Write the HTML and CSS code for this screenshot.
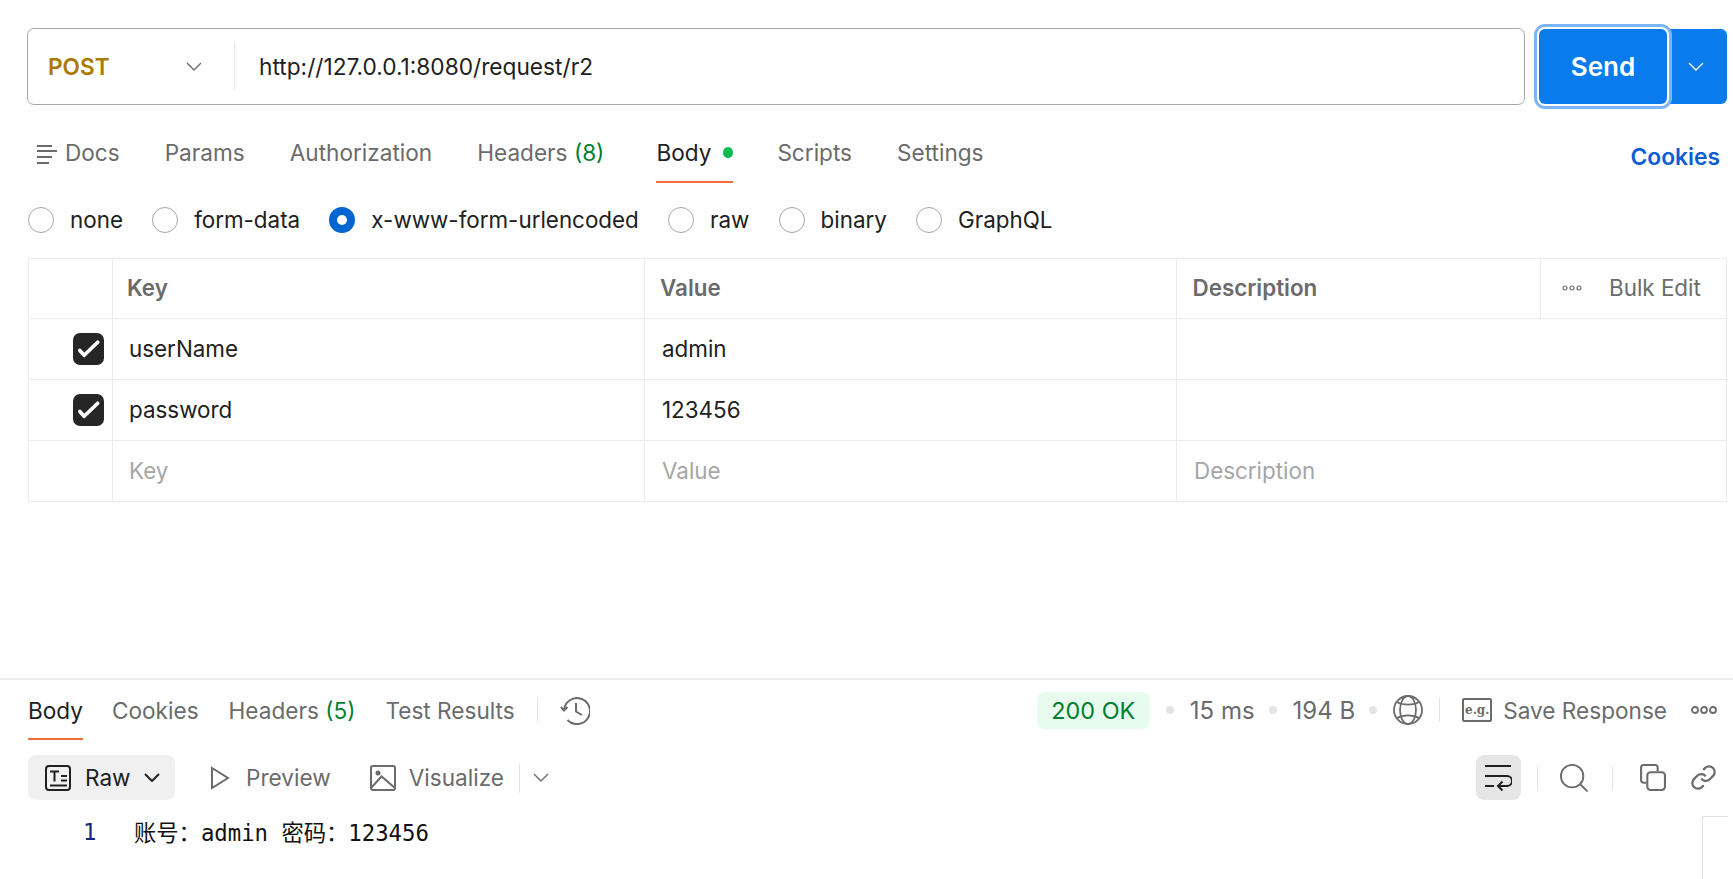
FILE: index.html
```html
<!DOCTYPE html>
<html lang="en">
<head>
<meta charset="utf-8">
<title>POST request</title>
<link rel="stylesheet" href="styles.css">
</head>
<body>
<div class="app">
  <section class="request">
    <div class="url-row">
      <div class="url-box">
        <div class="method"><span class="method-name">POST</span>
          <svg class="chev" viewBox="0 0 16 9"><path d="M1 1l7 7 7-7"/></svg>
        </div>
        <div class="url">http://127.0.0.1:8080/request/r2</div>
      </div>
      <div class="send-group">
        <button class="send">Send</button>
        <button class="send-more"><svg class="chev chev-white" viewBox="0 0 16 9"><path d="M1 1l7 7 7-7"/></svg></button>
      </div>
    </div>

    <nav class="tabs">
      <span class="tab tab-docs"><svg class="docs-icon" viewBox="0 0 20 20"><path d="M0 2h15M0 7h20M0 13h15M0 19h12"/></svg><span>Docs</span></span>
      <span class="tab">Params</span>
      <span class="tab">Authorization</span>
      <span class="tab"><span>Headers <span class="count">(8)</span></span></span>
      <span class="tab tab-active tab-body">Body<i class="dot"></i></span>
      <span class="tab">Scripts</span>
      <span class="tab">Settings</span>
      <span class="cookies">Cookies</span>
    </nav>

    <div class="radios">
      <label class="radio"><i class="circle"></i>none</label>
      <label class="radio"><i class="circle"></i>form-data</label>
      <label class="radio"><i class="circle circle-on"></i>x-www-form-urlencoded</label>
      <label class="radio"><i class="circle"></i>raw</label>
      <label class="radio"><i class="circle"></i>binary</label>
      <label class="radio"><i class="circle"></i>GraphQL</label>
    </div>

    <div class="kv">
      <div class="cell"></div>
      <div class="cell head head-key">Key</div>
      <div class="cell head">Value</div>
      <div class="cell head head-desc">Description</div>
      <div class="cell bulk">
        <svg class="dots-small" viewBox="0 0 20 6"><circle cx="3" cy="3" r="2"/><circle cx="10" cy="3" r="2"/><circle cx="17" cy="3" r="2"/></svg>
        <span>Bulk Edit</span>
      </div>

      <div class="cell check-cell"><span class="check"><svg viewBox="0 0 32 32"><path d="M7 17.500l4.500 5L25.500 9"/></svg></span></div>
      <div class="cell val">userName</div>
      <div class="cell val val-r">admin</div>
      <div class="cell val wide"></div>

      <div class="cell check-cell"><span class="check"><svg viewBox="0 0 32 32"><path d="M7 17.500l4.500 5L25.500 9"/></svg></span></div>
      <div class="cell val">password</div>
      <div class="cell val val-r">123456</div>
      <div class="cell val wide"></div>

      <div class="cell"></div>
      <div class="cell val ph">Key</div>
      <div class="cell val ph val-r">Value</div>
      <div class="cell val ph wide val-r">Description</div>
    </div>
  </section>

  <section class="response">
    <div class="res-head">
      <span class="rtab rtab-active">Body</span>
      <span class="rtab">Cookies</span>
      <span class="rtab"><span>Headers <span class="count">(5)</span></span></span>
      <span class="rtab">Test Results</span>
      <i class="vline vline-hist"></i>
      <svg class="ic ic-hist" viewBox="0 0 30 30"><path d="M4 15.500A13 13 0 1 1 7.500 25"/><path d="M1 12l3 3.500 3.500-3.500"/><path d="M16 8v8.500l6 3.500"/></svg>

      <div class="res-meta">
        <span class="status">200 OK</span>
        <i class="sep"></i><span class="metric">15 ms</span>
        <i class="sep"></i><span class="metric">194 B</span>
        <i class="sep"></i>
        <svg class="ic ic-globe" viewBox="0 0 30 30"><circle cx="15" cy="15" r="14"/><ellipse cx="15" cy="15" rx="8" ry="14"/><path d="M4 7C10 10.500 20 10.500 26 7M4 23C10 19.500 20 19.500 26 23"/></svg>
        <i class="vline"></i>
        <span class="eg"><span>e.g.</span></span>
        <span class="save">Save Response</span>
        <svg class="dots-big" viewBox="0 0 26 8"><circle cx="4" cy="4" r="3"/><circle cx="13" cy="4" r="3"/><circle cx="22" cy="4" r="3"/></svg>
      </div>
    </div>

    <div class="res-tools">
      <span class="raw">
        <svg class="ic ic-raw" viewBox="0 0 26 26"><rect x="1" y="1" width="24" height="24" rx="3"/><path d="M5 6.500h9M9.500 6.500v10M16 11h6M16 15.500h6M5 20.500h17"/></svg>
        <span>Raw</span>
        <svg class="chev chev-dark" viewBox="0 0 16 9"><path d="M1 1l7 7 7-7"/></svg>
      </span>
      <span class="tool tool-preview"><svg class="ic ic-play" viewBox="0 0 20 24"><path d="M2 2l16 10L2 22z"/></svg><span>Preview</span></span>
      <span class="tool tool-vis"><svg class="ic ic-img" viewBox="0 0 26 26"><rect x="1" y="1" width="24" height="24" rx="2"/><circle cx="8" cy="8" r="2.500" class="solid"/><path d="M1 23l10.500-11.500L25 23"/></svg><span>Visualize</span></span>
      <i class="vline vline-vis"></i>
      <svg class="chev chev-vis" viewBox="0 0 16 9"><path d="M1 1l7 7 7-7"/></svg>

      <div class="res-actions">
        <span class="wrap-btn">
          <svg class="ic ic-wrap" viewBox="0 0 28 26"><path d="M1 1h26M1 11h22a4.500 4.500 0 0 1 0 10h-9M18.500 16.500l-4.500 4.500 4.500 4.500M1 21h9"/></svg>
        </span>
        <i class="vline vline-a"></i>
        <svg class="ic ic-search" viewBox="0 0 30 30"><circle cx="13" cy="13" r="12"/><path d="M22 22l7.500 7.500"/></svg>
        <i class="vline vline-b"></i>
        <svg class="ic ic-copy" viewBox="0 0 26 26"><path d="M7 18H4a2.500 2.500 0 0 1-2-2.500V3.500A2.500 2.500 0 0 1 4 1h12a2.500 2.500 0 0 1 2 2.500V7"/><rect x="8" y="8" width="17" height="17" rx="3"/></svg>
        <svg class="ic ic-link" viewBox="0 0 24 24"><path d="M10 13a5 5 0 0 0 7.540.54l3-3a5 5 0 0 0-7.070-7.070l-1.720 1.710"/><path d="M14 11a5 5 0 0 0-7.540-.54l-3 3a5 5 0 0 0 7.070 7.070l1.710-1.710"/></svg>
      </div>
    </div>

    <div class="code">
      <span class="ln">1</span>
      <span class="code-text">账号：admin 密码：123456</span>
      <i class="scroll-track"></i>
    </div>
  </section>
</div>
</body>
</html>
```

FILE: styles.css
```css
* { box-sizing: border-box; }
html, body { margin: 0; padding: 0; background: #fff; }
body {
  font-family: Inter, "Noto Sans", sans-serif;
  font-size: 22.400px;
  color: #6b6b6b;
  overflow: hidden;
}
i { display: block; font-style: normal; }
svg { display: block; flex: none; }
.app { width: 1733px; height: 879px; display: flex; flex-direction: column; }
.request { flex: 1; padding: 28px 5px 0 27px; }

.url-row { display: flex; align-items: flex-start; }
.url-box {
  width: 1498px; height: 77px; flex: none;
  border: 1.500px solid #a8a8a8; border-radius: 7px;
  display: flex; align-items: center;
}
.method {
  width: 207px; height: 46px; padding: 0 10px 0 20px;
  display: flex; align-items: center; justify-content: space-between;
  border-right: 1px solid #e6e6e6;
}
.method-name { color: #ab7800; font-weight: 600; font-size: 22.600px; }
.method .chev { margin-right: 22px; }
.url { color: #212121; padding-left: 24px; font-size: 22.700px; }
.chev { width: 16px; height: 9px; fill: none; stroke: #6b6b6b; stroke-width: 1.400; }
.chev-white { stroke: #fff; }
.chev-dark { stroke: #212121; stroke-width: 2; }

.send-group { display: flex; margin-left: 14px; align-items: flex-start; padding-top: 1px; }
.send {
  width: 128px; height: 75px;
  background: #097bed; color: #fff; border: 0; border-radius: 6px;
  font: 600 26px Inter, sans-serif;
  box-shadow: 0 0 0 2px #fff, 0 0 0 5px #7cb5f6;
  position: relative; z-index: 1; padding: 0;
}
.send-more {
  width: 60px; height: 75px; padding: 0 0 0 21px;
  background: #097bed; border: 0; border-radius: 0 6px 6px 0;
  display: flex; align-items: center;
}

.tabs { display: flex; align-items: flex-start; height: 75.500px; margin-top: 26px; padding-left: 10px; gap: 45px; font-size: 22.600px; }
.tab { display: flex; align-items: center; height: 49px; white-space: pre; padding-bottom: 6px; }
.tab-docs { gap: 8px; }
.docs-icon { width: 20px; height: 20px; fill: none; stroke: #6b6b6b; stroke-width: 2; margin-top: 2px; }
.count { color: #007f31; }
.tab-active { color: #212121; }
.tab-body { margin-left: 7px; border-bottom: 2.500px solid #f26b3a; width: 77px; margin-right: -1px; height: 52px; padding-bottom: 7.500px; }
.dot { width: 11px; height: 11px; border-radius: 50%; background: #0cbb52; margin-left: 12px; }
.cookies { margin-left: auto; margin-right: 8px; margin-top: 12px; color: #0b5fd0; font-weight: 600; font-size: 22.800px; }

.radios { display: flex; height: 26px; padding-left: 1px; gap: 29.200px; color: #212121; }
.radio { display: flex; align-items: center; gap: 16px; }
.circle { width: 26px; height: 26px; border-radius: 50%; border: 1.300px solid #a6a6a6; background: #fff; }
.circle-on { border: 8px solid #0265d2; }

.kv {
  display: grid;
  grid-template-columns: 84px 532px 532px 364px 186px;
  grid-auto-rows: 60.800px;
  margin-top: 25px; width: 1698px; margin-left: 1px;
  border-top: 1.500px solid #ececec; border-left: 1.500px solid #ececec;
}
.cell {
  border-right: 1.500px solid #ececec; border-bottom: 1.500px solid #ececec;
  display: flex; align-items: center; padding: 0 0 1px 15px;
}
.head { font-weight: 600; }
.head-key { padding-left: 14px; }
.head-desc { padding-left: 15.500px; }
.val { color: #212121; padding-left: 16px; }
.val-r { padding-left: 17px; }
.wide { grid-column: span 2; }
.ph { color: #a6a6a6; }
.bulk { padding-left: 21px; gap: 27px; }
.dots-small { width: 20px; height: 6px; fill: none; stroke: #6b6b6b; stroke-width: 1.200; }
.check-cell { justify-content: flex-end; padding: 0 8px 0 0; }
.check { width: 31px; height: 32px; background: #262626; border-radius: 7px; display: flex; align-items: center; justify-content: center; }
.check svg { width: 31px; height: 32px; fill: none; stroke: #fff; stroke-width: 3.800; stroke-linecap: round; stroke-linejoin: round; }

.response { height: 201px; flex: none; border-top: 2px solid #ededed; position: relative; font-size: 22.600px; }
.res-head { display: flex; align-items: center; height: 60px; padding: 0 16px 0 28px; position: relative; }
.rtab { display: flex; white-space: pre; margin-right: 30px; }
.rtab-active { color: #212121; position: relative; margin-right: 29px; }
.rtab-active::after { content: ""; position: absolute; left: 0; right: 0; top: 41px; height: 2.500px; background: #f26b3a; }
.vline { width: 1px; height: 24px; background: #e4e4e4; flex: none; }
.vline-hist { margin-left: -7.500px; margin-right: 22px; }
.ic { fill: none; stroke: #6b6b6b; stroke-width: 2; }
.ic-hist { width: 30px; height: 30px; }
.res-meta { margin-left: auto; display: flex; align-items: center; }
.status { width: 113px; height: 37px; background: #e7fbef; color: #007f31; border-radius: 8px; display: flex; align-items: center; justify-content: center; font-size: 23.400px; margin-right: 2px; }
.metric { font-size: 24px; }
.sep { width: 8px; height: 8px; background: #e4e4e4; border-radius: 50%; margin-right: 16px; }
.res-meta span + .sep { margin-left: 14px; }
.ic-globe { width: 30px; height: 30px; margin-right: 16px; stroke-width: 1.800; }
.eg {
  width: 30px; height: 24px; border: 2px solid #6b6b6b; border-radius: 2px;
  margin-left: 22px; margin-right: 11px;
  display: flex; align-items: center; justify-content: center;
  font: 700 12px "DejaVu Serif", serif; color: #6b6b6b;
}
.dots-big { width: 26px; height: 8px; fill: none; stroke: #6b6b6b; stroke-width: 1.800; margin-left: 24px; }

.res-tools { display: flex; align-items: center; height: 45px; margin-top: 15px; padding: 0 16px 0 28px; }
.raw { width: 147px; height: 45px; background: #f0f0f0; border-radius: 8px; display: flex; align-items: center; color: #212121; padding-left: 17px; }
.ic-raw { width: 26px; height: 26px; stroke: #212121; margin-right: 14px; }
.raw .chev { margin-left: 13px; }
.tool { display: flex; align-items: center; }
.tool-preview { margin-left: 35px; gap: 16px; }
.ic-play { width: 20px; height: 24px; }
.tool-vis { margin-left: 39px; gap: 13px; }
.ic-img { width: 26px; height: 26px; }
.ic-img .solid { fill: #6b6b6b; stroke: none; }
.vline-vis { margin-left: 15px; height: 30px; }
.chev-vis { margin-left: 13px; }
.res-actions { margin-left: auto; display: flex; align-items: center; }
.wrap-btn { width: 45px; height: 45px; background: #e6e6e6; border-radius: 8px; display: flex; align-items: center; justify-content: center; }
.ic-wrap { width: 28px; height: 26px; stroke: #212121; }
.vline-a { margin-left: 16px; margin-right: 22px; }
.vline-b { margin-left: 24px; margin-right: 26px; }
.ic-search { width: 28px; height: 28px; }
.ic-copy { width: 27px; height: 27px; margin-right: 24.500px; }
.ic-link { width: 27px; height: 27px; }

.code {
  display: flex; align-items: center; height: 24px; margin-top: 19px; padding-left: 83px;
  font-family: "DejaVu Sans Mono", "Noto Sans CJK SC", monospace;
  font-size: 22.300px; color: #111;
}
.ln { color: #1a237e; width: 51px; flex: none; padding-top: 2px; }
.code-text { white-space: pre; }
.scroll-track {
  position: absolute; right: 5px; bottom: 0; width: 26px; height: 63px;
  border-left: 1px solid #e0e0e0; border-top: 1px solid #e0e0e0;
}
```
